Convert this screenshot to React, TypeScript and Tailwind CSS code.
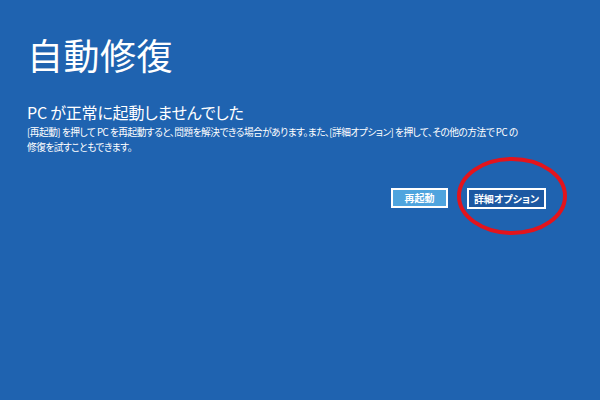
import React from "react";

const jp = "font-['Segoe_UI','Noto_Sans_CJK_JP',sans-serif] [font-feature-settings:'palt']";

function App() {
  return (
    <div className={`relative w-[600px] h-[400px] overflow-hidden bg-[#1f63b0] text-white ${jp}`}>
      <div className="pl-[27px] flex flex-col">
        <h1 className="mt-[36px] text-[36px] leading-none tracking-[0.5px] font-normal">自動修復</h1>
        <h2 className="mt-[32px] text-[16px] leading-none font-normal tracking-[-0.2px]">PC が正常に起動しませんでした</h2>
        <p className="mt-[5px] text-[9.7px] leading-[15px] tracking-[-0.5px]">
          [再起動] を押して PC を再起動すると、問題を解決できる場合があります。また、[詳細オプション] を押して、その他の方法で PC の
          <br />
          修復を試すこともできます。
        </p>
      </div>
      <div className="mt-[33px] pr-[54px] flex justify-end gap-[19px]">
        <button className="w-[57px] h-[20px] border-2 border-white bg-[#4ea4de] text-[10px] font-bold leading-none flex items-center justify-center">
          再起動
        </button>
        <button className="w-[79px] h-[21px] border-2 border-white bg-[#1c58a2] text-[10px] font-bold leading-none flex items-center justify-center">
          詳細オプション
        </button>
      </div>
      {/* red circle drawn around the advanced options button */}
      <svg className="absolute left-[455px] top-[156px]" width="114" height="80" viewBox="0 0 114 80">
        <ellipse cx="57" cy="40" rx="53" ry="37" fill="none" stroke="#e3141c" strokeWidth="4" />
      </svg>
    </div>
  );
}

export default App;
